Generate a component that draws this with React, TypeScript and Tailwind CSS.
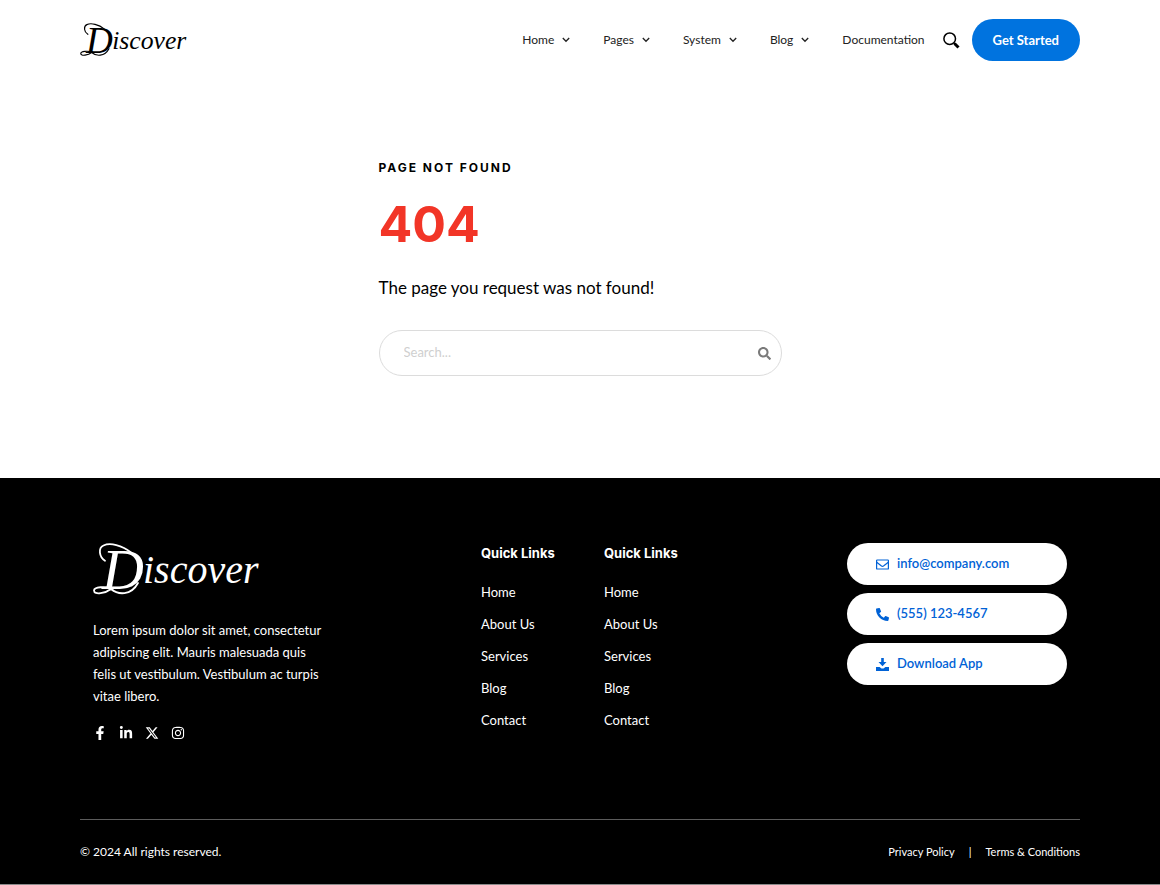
import React, { FormEvent } from "react";
import {
  FaFacebookF,
  FaInstagram,
  FaLinkedinIn,
  FaPhoneAlt,
  FaSearch,
} from "react-icons/fa";
import { FaXTwitter } from "react-icons/fa6";

const navLinks = [
  { label: "Home", menu: true },
  { label: "Pages", menu: true },
  { label: "System", menu: true },
  { label: "Blog", menu: true },
  { label: "Documentation", menu: false },
];

const quickLinks = ["Home", "About Us", "Services", "Blog", "Contact"];

const socials = [
  { label: "Facebook", Icon: FaFacebookF },
  { label: "LinkedIn", Icon: FaLinkedinIn },
  { label: "X", Icon: FaXTwitter },
  { label: "Instagram", Icon: FaInstagram },
];

const contacts = [
  { label: "info@company.com", href: "mailto:info@company.com", Icon: MailIcon },
  { label: "(555) 123-4567", href: "tel:5551234567", Icon: FaPhoneAlt },
  { label: "Download App", href: "#", Icon: DownloadIcon },
];

const App = () => {
  return (
    <div className="bg-white text-black font-['Lato',sans-serif]">
      <Header />
      <NotFound />
      <Footer />
    </div>
  );
};

const Header = () => (
  <header className="flex items-center justify-between px-20 pt-[19px] pb-5">
    <a href="#" aria-label="Discover">
      <Logo className="w-[108px] h-[34px]" />
    </a>
    <div className="flex items-center">
      <nav className="flex items-center gap-[33px] text-[12px] leading-5 text-[#222]">
        {navLinks.map(({ label, menu }) => (
          <a key={label} href="#" className="flex items-center gap-2">
            {label}
            {menu && <ChevronIcon />}
          </a>
        ))}
      </nav>
      <button type="button" aria-label="Open search" className="ml-4.5 mr-3">
        <MagnifierIcon />
      </button>
      <a
        href="#"
        className="rounded-full bg-[#0073df] px-[21px] py-[11px] text-[13px] leading-5 font-bold text-white"
      >
        Get Started
      </a>
    </div>
  </header>
);

const NotFound = () => (
  <main className="flex justify-center px-20 pt-[77px] pb-[102px]">
    <div className="w-full max-w-[403px]">
      <p className="font-['Inter',sans-serif] text-[12px] leading-5 font-bold tracking-[2px]">
        PAGE NOT FOUND
      </p>
      <h1 className="mt-4 font-['Inter',sans-serif] text-[50px] leading-[60px] font-bold text-[#f23527]">
        404
      </h1>
      <p className="mt-5 text-[17px] leading-7">
        The page you request was not found!
      </p>
      <form
        onSubmit={searchHandler}
        className="mt-7 flex h-[46px] items-center rounded-full border border-[#dcdcdc] pl-6 pr-2.5"
      >
        <input
          type="text"
          name="search"
          aria-label="Search"
          placeholder="Search..."
          className="min-w-0 grow bg-transparent text-[13px] outline-none placeholder:text-[#cfcfcf]"
        />
        <button type="submit" aria-label="Search" className="text-[#7a7a7a]">
          <FaSearch size={13} />
        </button>
      </form>
    </div>
  </main>
);

const Footer = () => (
  <footer className="border-b border-[#8a8a8a] bg-black px-20 pt-[65px] text-white">
    <div className="flex px-[13px] pb-[79px]">
      <div className="w-[388px]">
        <a href="#" aria-label="Discover" className="block w-fit">
          <Logo className="w-[168px] h-[53px]" />
        </a>
        <p className="mt-[23px] w-[228px] text-[13px] leading-[22px]">
          Lorem ipsum dolor sit amet, consectetur adipiscing elit. Mauris
          malesuada quis felis ut vestibulum. Vestibulum ac turpis vitae libero.
        </p>
        <div className="mt-[19px] flex gap-3">
          {socials.map(({ label, Icon }) => (
            <a key={label} href="#" aria-label={label}>
              <Icon size={14} />
            </a>
          ))}
        </div>
      </div>
      <QuickLinks />
      <QuickLinks />
      <div className="ml-auto flex w-[220px] flex-col gap-2">
        {contacts.map(({ label, href, Icon }) => (
          <a
            key={label}
            href={href}
            className="flex h-[42px] items-center gap-2 rounded-full bg-white pl-[29px] text-[13px] font-semibold text-[#0062d6]"
          >
            <Icon size={13} />
            {label}
          </a>
        ))}
      </div>
    </div>
    <div className="flex justify-between border-t border-[#5c5c5c] py-[22px] text-[12px] leading-5">
      <p>© 2024 All rights reserved.</p>
      <div className="flex gap-3.5 text-[11px]">
        <a href="#">Privacy Policy</a>
        <span>|</span>
        <a href="#">Terms &amp; Conditions</a>
      </div>
    </div>
  </footer>
);

const QuickLinks = () => (
  <div className="w-[123px]">
    <h2 className="font-['Inter',sans-serif] text-[13px] leading-5 font-bold">
      Quick Links
    </h2>
    <ul className="mt-[19px] flex flex-col gap-3 text-[13px] leading-5">
      {quickLinks.map((label) => (
        <li key={label}>
          <a href="#">{label}</a>
        </li>
      ))}
    </ul>
  </div>
);

type IconProps = { size?: number };

// Word mark: live text with pen flourishes around the capital
function Logo({ className }: { className: string }) {
  return (
    <svg
      viewBox="0 0 168 53"
      className={`overflow-visible ${className}`}
      fill="currentColor"
    >
      <text className="font-['Liberation_Serif',serif] italic">
        <tspan x="9" y="46" fontSize="58">
          D
        </tspan>
        <tspan x="50" y="40" fontSize="40">
          iscover
        </tspan>
      </text>
      <g fill="none" stroke="currentColor" strokeWidth="1.8" strokeLinecap="round">
        <path d="M12 17.700C6 14 5 5 10.500 2.500C17 -.5 29 2 38 9.500" />
        <path d="M20 45.500C12 43 1 44 1 47.500C1 52.500 13 50 18 46C25 52 38 53 45 40" />
      </g>
    </svg>
  );
}

function ChevronIcon() {
  return (
    <svg width="8" height="6" viewBox="0 0 8 6" fill="none" stroke="currentColor" strokeWidth="1.3">
      <path d="M.8 1L4 4.300L7.200 1" />
    </svg>
  );
}

function MagnifierIcon() {
  return (
    <svg width="17" height="17" viewBox="0 0 17 17" fill="none" stroke="currentColor">
      <circle cx="6.700" cy="6.700" r="5.800" strokeWidth="1.500" />
      <path d="M10.800 10.800L12.200 12.200" strokeWidth="1.500" />
      <path d="M11.500 11.500L15.500 15.500" strokeWidth="3" />
    </svg>
  );
}

function MailIcon({ size = 13 }: IconProps) {
  return (
    <svg width={size} height={size} viewBox="0 0 13 13" fill="none" stroke="currentColor" strokeWidth="1.2">
      <rect x=".6" y="2" width="11.800" height="9" rx=".6" />
      <path d="M.7 4.300L5.500 8Q6.500 8.700 7.500 8L12.300 4.300" />
    </svg>
  );
}

function DownloadIcon({ size = 13 }: IconProps) {
  return (
    <svg width={size} height={size} viewBox="0 0 13 13" fill="currentColor">
      <path d="M5.200 0H7.800V4H10.500L6.500 8.200L2.500 4H5.200Z" />
      <path d="M0 9H3.600L5.500 10.600H7.500L9.400 9H13V13H0Z" />
    </svg>
  );
}

function searchHandler(event: FormEvent<HTMLFormElement>) {
  event.preventDefault();
}

export default App;
